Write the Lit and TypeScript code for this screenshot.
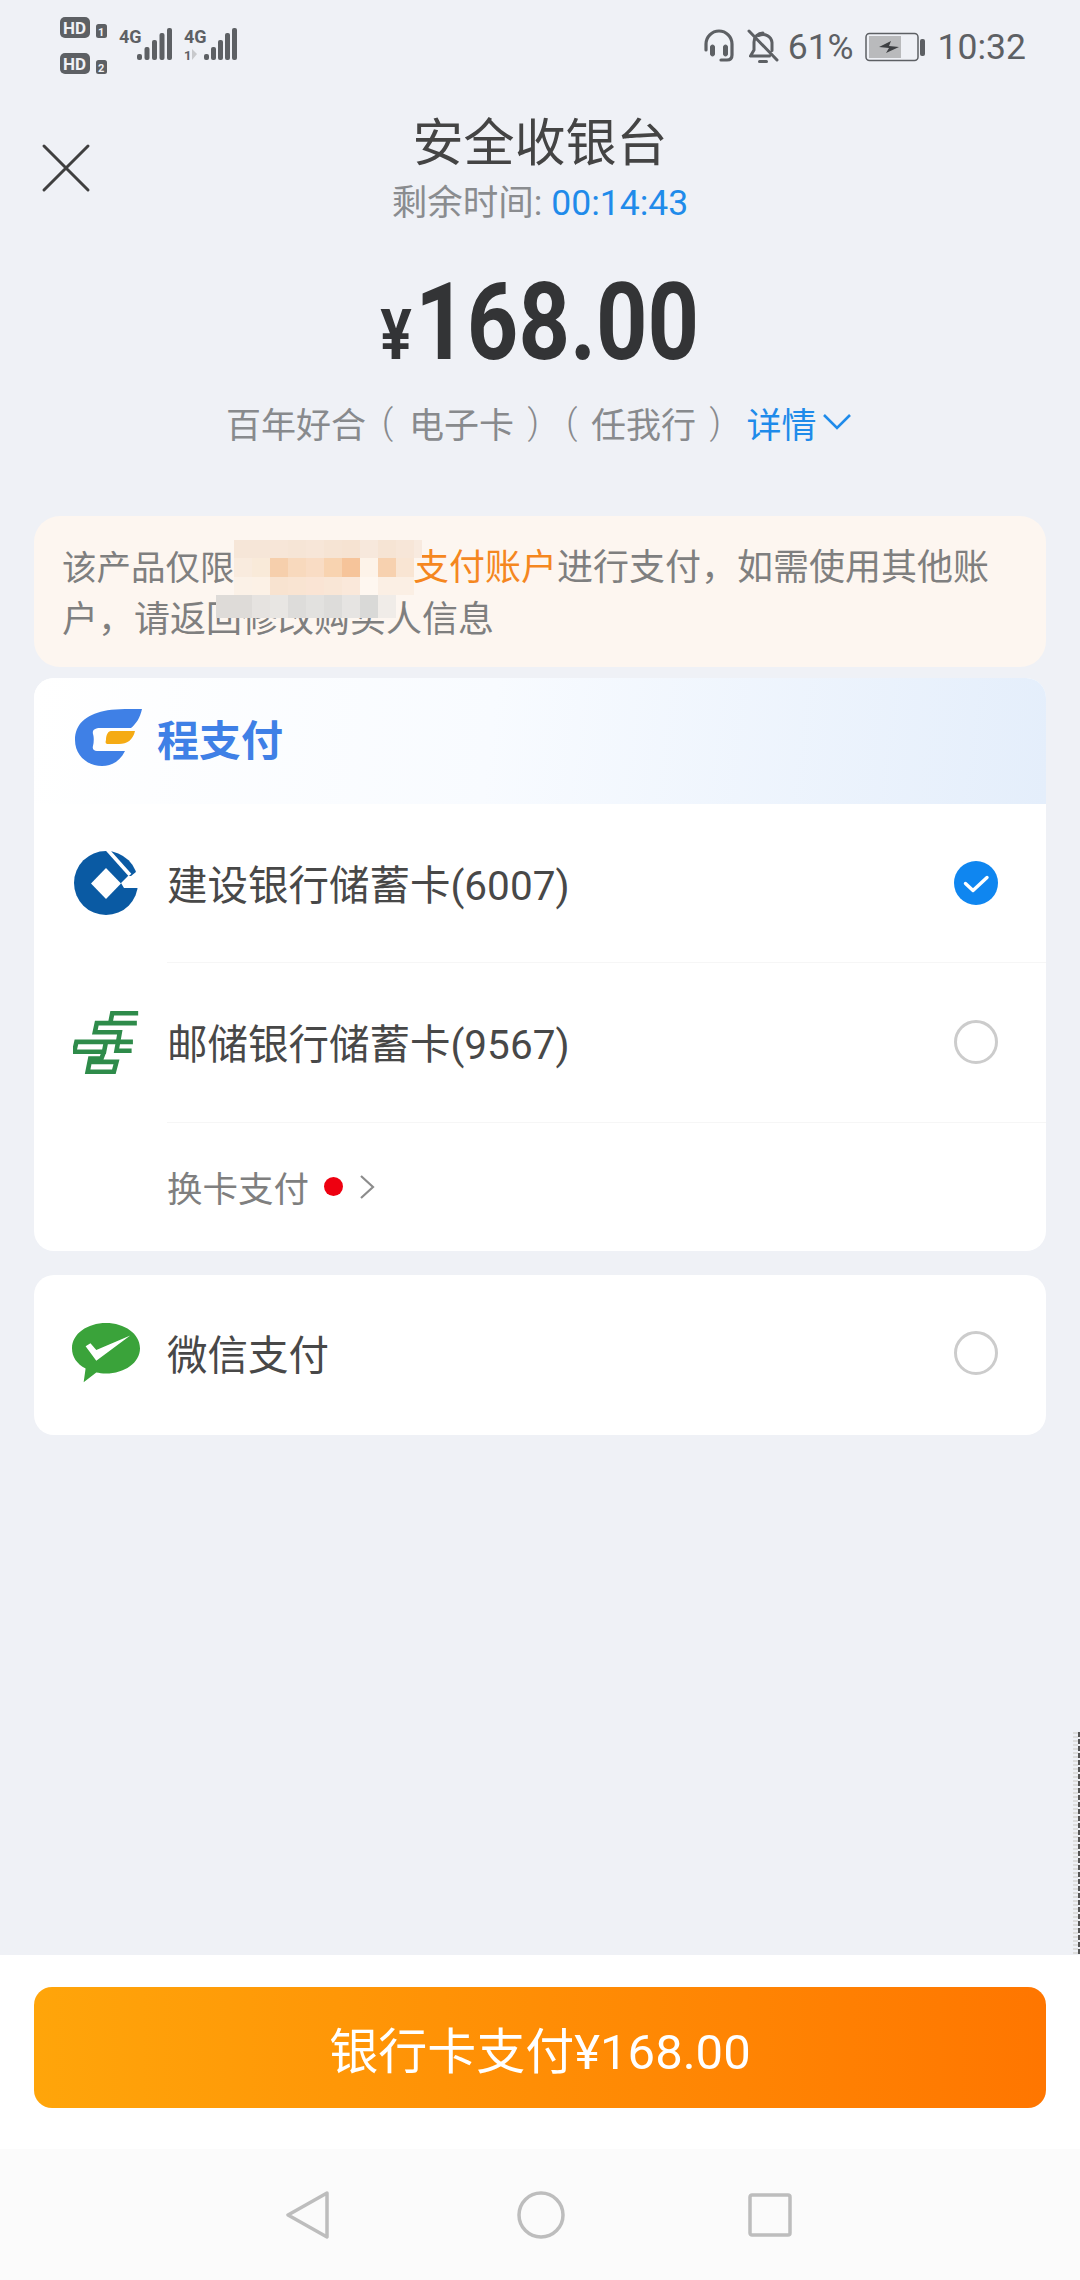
import { LitElement, html, css, svg } from "lit";
import { customElement } from "lit/decorators.js";

const mosaicRows: string[][] = [
  ["", "#f6e6d8", "#f6e6d8", "#f7e6d8", "#f6e5d6", "#f7e6d8", "#f6e4d4", "#f6e3d2", "#f7e8dc", "#f6e4d4", "#f7e6d8", "#f8eadf"],
  ["", "#f9ebde", "#f9ead9", "#f6cfac", "#f8d9bd", "#f9dcc4", "#f8d3b0", "#f6c49a", "#fdf3e9", "#f7d1af", "#f9e5d3", ""],
  ["", "#fbf1e7", "#fcf1e6", "#f8e3d0", "#f9e4d2", "#fae4d4", "#f9e6d6", "#fae8da", "#fef7f0", "#fbefe4", "#fbefe4", ""],
  ["#dedbd8", "#dedbd8", "#e6e3e0", "#e8e6e3", "#dddcda", "#e2e1df", "#dddcda", "#e6e4e2", "#d9d9d7", "#f0ece8", "", ""],
];
const barHeights = [6, 13, 20, 27, 32];

@customElement("app-root")
export class AppRoot extends LitElement {
  static styles = css`
    :host { display: block; width: 1080px; height: 2280px; font-family: "Roboto", "Noto Sans CJK SC", sans-serif; }
    .page { position: relative; width: 1080px; height: 2280px; background: #eff1f6; display: flex; flex-direction: column; overflow: hidden; }
    .status { height: 90px; flex: none; display: flex; justify-content: space-between; color: #5d6064; }
    .status-left { padding: 16px 0 0 58px; }
    .status-right { display: flex; align-items: center; height: 94px; padding-right: 54px; font-size: 35.5px; }
    .pct { margin: 0 11px 0 9px; }
    .clock { margin-left: 13px; }
    .header { position: relative; height: 134px; flex: none; display: flex; flex-direction: column; align-items: center; }
    .close { position: absolute; left: 40px; top: 52px; }
    .title { font-size: 51px; line-height: 60px; margin-top: 24px; color: #444; }
    .timer { font-size: 35.5px; line-height: 42px; margin-top: 8px; color: #8a8c8f; }
    .timer b { font-weight: 400; color: #1f8bea; }
    .amount { height: 130px; margin-top: 34px; flex: none; display: flex; justify-content: center; align-items: center; color: #333436; font-weight: 700; }
    .amount-in { display: flex; align-items: baseline; transform: scaleX(0.84); }
    .yen { font-size: 70px; font-weight: 700; margin-right: 4px; }
    .num { font-size: 107px; line-height: 130px; }
    .desc { flex: none; margin-top: 12px; height: 44px; padding-left: 226px; display: flex; align-items: center; font-size: 35px; color: #888a8d; }
    .p { display: inline-block; width: 38.5px; text-align: center; font-weight: 300; }
    .p.wide { width: 43px; }
    .detail { color: #1f8bea; margin-left: 12px; display: flex; align-items: center; }
    .notice { position: relative; flex: none; margin: 72px 34px 0; height: 151px; box-sizing: border-box; padding: 26px 28px 0; border-radius: 26px; background: #fdf6f0; color: #7f7f7f; font-size: 36px; line-height: 52px; white-space: nowrap; }
    .notice em { font-style: normal; color: #f5871f; }
    .lead { font-size: 34.5px; }
    .gap { display: inline-block; width: 178.5px; }
    .mosaic { position: absolute; left: 182px; top: 24px; display: grid; grid-template-columns: repeat(11, 18px) 8px; grid-template-rows: 18px 19px 18px 23px; }
    .card { flex: none; margin: 11px 34px 0; background: #fff; border-radius: 20px; overflow: hidden; }
    .card-2 { margin-top: 24px; padding-bottom: 5px; }
    .brand { height: 126px; display: flex; align-items: center; padding: 0 0 6px 41px; box-sizing: border-box; background: linear-gradient(97deg, #fff 0%, #f8fbff 45%, #e4eefb 100%); }
    .brand-name { font-size: 42px; font-weight: 700; color: #3f80e6; margin: 0 0 2px 14px; }
    .row { height: 158px; display: flex; align-items: center; }
    .row-2 { height: 160px; }
    .row-3 { height: 155px; }
    .icon { width: 133px; flex: none; display: flex; justify-content: center; padding-left: 10px; box-sizing: border-box; }
    .row-main { flex: 1; height: 100%; display: flex; align-items: center; justify-content: space-between; padding-right: 48px; font-size: 40.5px; color: #484848; border-bottom: 1px solid #f6f6f6; }
    .row-main.plain { border: none; }
    .radio { width: 44px; height: 44px; box-sizing: border-box; border: 3px solid #cccccc; border-radius: 50%; }
    .more { height: 129px; display: flex; align-items: center; padding-left: 133px; font-size: 35.5px; color: #7f7f7f; }
    .dot { width: 19px; height: 19px; border-radius: 50%; background: #ee0010; margin: 0 16px 0 15px; }
    .spacer { flex: 1; }
    .footer { flex: none; height: 194px; box-sizing: border-box; padding: 32px 34px 0; background: #fff; }
    .pay { height: 121px; border-radius: 18px; background: linear-gradient(90deg, #ffa50a, #ff7600); display: flex; align-items: center; justify-content: center; color: #fff; font-size: 49px; }
    .nav { flex: none; height: 131px; background: #fbfbfb; display: flex; justify-content: center; align-items: center; gap: 183px; padding-right: 2px; box-sizing: border-box; }
    .edge { position: absolute; right: 0; top: 1732px; width: 7px; height: 222px; background: repeating-linear-gradient(180deg, #555 0 5px, transparent 5px 7px) right / 2px 100% no-repeat, repeating-linear-gradient(180deg, #dcdcdc 0 2px, transparent 2px 4px) left / 5px 100% no-repeat; }
  `;

  private check() {
    return html`<svg width="44" height="44" viewBox="0 0 44 44"><circle cx="22" cy="22" r="22" fill="#0f86f0"/><path d="M11.500 22.500l7.500 7 14-13" fill="none" stroke="#fff" stroke-width="3.400" stroke-linecap="round" stroke-linejoin="round"/></svg>`;
  }

  render() {
    return html`<div class="page">
      <div class="status">
        <div class="status-left">
          <svg width="190" height="64" viewBox="0 0 190 64">
            <g fill="#5d6064">
              <rect x="2" y="1" width="30" height="21" rx="5"/><rect x="38" y="8" width="11" height="14" rx="2.500"/>
              <rect x="2" y="37" width="30" height="21" rx="5"/><rect x="38" y="44" width="11" height="14" rx="2.500"/>
              ${barHeights.map((h, i) => svg`<rect x=${79 + i * 7.5} y=${44 - h} width="5" height=${h} rx="2"/>`)}
              ${barHeights.map((h, i) => svg`<rect x=${146 + i * 7} y=${44 - h} width="5" height=${h} rx="2"/>`)}
            </g>
            <g fill="#f0f1f5" font-size="17" font-weight="700" font-family="Roboto">
              <text x="5" y="18">HD</text><text x="5" y="54">HD</text>
              <text x="40" y="20" font-size="11">1</text><text x="40" y="56" font-size="11">2</text>
            </g>
            <g fill="#5d6064" font-size="18" font-weight="700" font-family="Roboto">
              <text x="61" y="27">4G</text><text x="126" y="27">4G</text>
              <text x="126" y="44" font-size="13">1</text>
            </g>
            <path d="M134 33v11l5-6z" fill="#c8c9cc"/>
          </svg>
        </div>
        <div class="status-right">
          <svg width="32" height="36" viewBox="0 0 32 36" fill="none" stroke="#5d6064">
            <path d="M3 21v-6a13 13 0 0 1 26 0v6v5q0 5-5 5h-6" stroke-width="3.200" stroke-linecap="round"/>
            <rect x="7.500" y="16" width="4" height="11" rx="2" fill="#5d6064" stroke-width="1"/>
            <rect x="20.500" y="16" width="4" height="11" rx="2" fill="#5d6064" stroke-width="1"/>
          </svg>
          <svg style="margin-left:12px" width="32" height="36" viewBox="0 0 32 36" fill="none" stroke="#5d6064" stroke-width="3">
            <path d="M2 2l28 29M16 4a9 9 0 0 0-9 9v8l-3.500 6h19M12 6.500a9 9 0 0 1 13 7v8" stroke-linecap="round" stroke-linejoin="round"/>
            <path d="M12.500 32.500h7" stroke-linecap="round"/>
          </svg>
          <span class="pct">61%</span>
          <svg width="60" height="30" viewBox="0 0 60 30">
            <rect x="1" y="1.500" width="52" height="27" rx="3.500" fill="none" stroke="#5d6064" stroke-width="1.500"/>
            <rect x="4" y="4" width="32" height="22" fill="#b9babc"/>
            <rect x="55" y="7" width="5" height="17" rx="2" fill="#5d6064"/>
            <path d="M14 15l12-6-2 5 10 1-13 6 3-5z" fill="#3d3f42"/>
          </svg>
          <span class="clock">10:32</span>
        </div>
      </div>

      <div class="header">
        <svg class="close" width="52" height="52" viewBox="0 0 52 52"><path d="M4 4l44 44M48 4L4 48" stroke="#3f3f3f" stroke-width="3" stroke-linecap="round"/></svg>
        <div class="title">安全收银台</div>
        <div class="timer">剩余时间: <b>00:14:43</b></div>
      </div>

      <div class="amount"><div class="amount-in"><span class="yen">¥</span><span class="num">168.00</span></div></div>

      <div class="desc">
        <span>百年好合</span><span class="p wide">(</span><span>电子卡</span><span class="p">)</span><span class="p">(</span><span>任我行</span><span class="p">)</span>
        <span class="detail">详情<svg style="margin-left:5px" width="30" height="18" viewBox="0 0 30 18"><path d="M2 2l13 13L28 2" fill="none" stroke="#1f8bea" stroke-width="2.600"/></svg></span>
      </div>

      <div class="notice">
        <div><span class="lead">该产品仅限</span><span class="gap"></span><em>支付账户</em><span>进行支付，如需使用其他账</span></div>
        <div>户，请返回修改购买人信息</div>
        <div class="mosaic">
          ${mosaicRows.flatMap((r) => r.map((c) => html`<i style="background:${c || "transparent"}"></i>`))}
        </div>
      </div>

      <div class="card">
        <div class="brand">
          <svg width="68" height="58" viewBox="0 0 68 58">
            <path d="M67 0C50 0 38 0 29 2C11 6 0 15 0 31C0 47 13 57 27 57C37 57 45 52 50 42H22C19 42 17 40 18 37C19 33 19 28 18 25C17 21 20 19 25 19H56C61 15 65 9 67 0Z" fill="#3f80e6"/>
            <path d="M36 22H60C58 31 52 35 44 35H33C31 35 30 34 31 31C31 26 33 22 36 22Z" fill="#f5ab14"/>
          </svg>
          <span class="brand-name">程支付</span>
        </div>
        <div class="row">
          <div class="icon">
            <svg width="66" height="70" viewBox="12 7 66 70">
              <circle cx="45" cy="42" r="32" fill="#0a5aa3"/>
              <path d="M44 6L69 34" stroke="#fff" stroke-width="3.600"/>
              <path d="M60 42L67 35H70L80 27V47H63Z" fill="#fff"/>
              <path d="M45 27L60 42.500 45 58 30 42.500Z" fill="#fff"/>
            </svg>
          </div>
          <div class="row-main"><span>建设银行储蓄卡(6007)</span>${this.check()}</div>
        </div>
        <div class="row row-2">
          <div class="icon">
            <svg width="66" height="64" viewBox="34 28 200 195" fill="none" stroke="#2e8b4a" stroke-width="14">
              <path d="M232 38H153L147 68H228M147 68H106L100 96H176L166 152H212"/>
              <path d="M216 125H44L37 155H128L134 125"/>
              <path d="M128 155L120 176H86L78 216H158L166 186H90"/>
            </svg>
          </div>
          <div class="row-main"><span>邮储银行储蓄卡(9567)</span><div class="radio"></div></div>
        </div>
        <div class="more"><span>换卡支付</span><span class="dot"></span>
          <svg width="16" height="26" viewBox="0 0 16 26"><path d="M2 2l12 11L2 24" fill="none" stroke="#8c8c8c" stroke-width="2.200"/></svg>
        </div>
      </div>

      <div class="card card-2">
        <div class="row row-3">
          <div class="icon">
            <svg width="68" height="62" viewBox="0 0 70 62">
              <path d="M35 0C54 0 70 11 70 26S54 52 35 52C31 52 28 51.500 25 51L12 61L14 47C5 42 0 35 0 26C0 11 16 0 35 0Z" fill="#3aa33a"/>
              <path d="M14 24l5-3 6 7 35-15-35 26z" fill="#fff"/>
            </svg>
          </div>
          <div class="row-main plain"><span>微信支付</span><div class="radio"></div></div>
        </div>
      </div>

      <div class="spacer"></div>
      <div class="footer"><div class="pay">银行卡支付¥168.00</div></div>
      <div class="nav">
        <svg width="48" height="50" viewBox="0 0 48 50"><path d="M41 3L2 25l39 22z" fill="none" stroke="#bdbdbd" stroke-width="3.500" stroke-linejoin="round"/></svg>
        <svg width="48" height="48" viewBox="0 0 48 48"><circle cx="24" cy="24" r="22" fill="none" stroke="#bdbdbd" stroke-width="3.500"/></svg>
        <svg width="44" height="44" viewBox="0 0 44 44"><rect x="2" y="2" width="40" height="40" rx="2" fill="none" stroke="#bdbdbd" stroke-width="3.500"/></svg>
      </div>
      <div class="edge"></div>
    </div>`;
  }
}
